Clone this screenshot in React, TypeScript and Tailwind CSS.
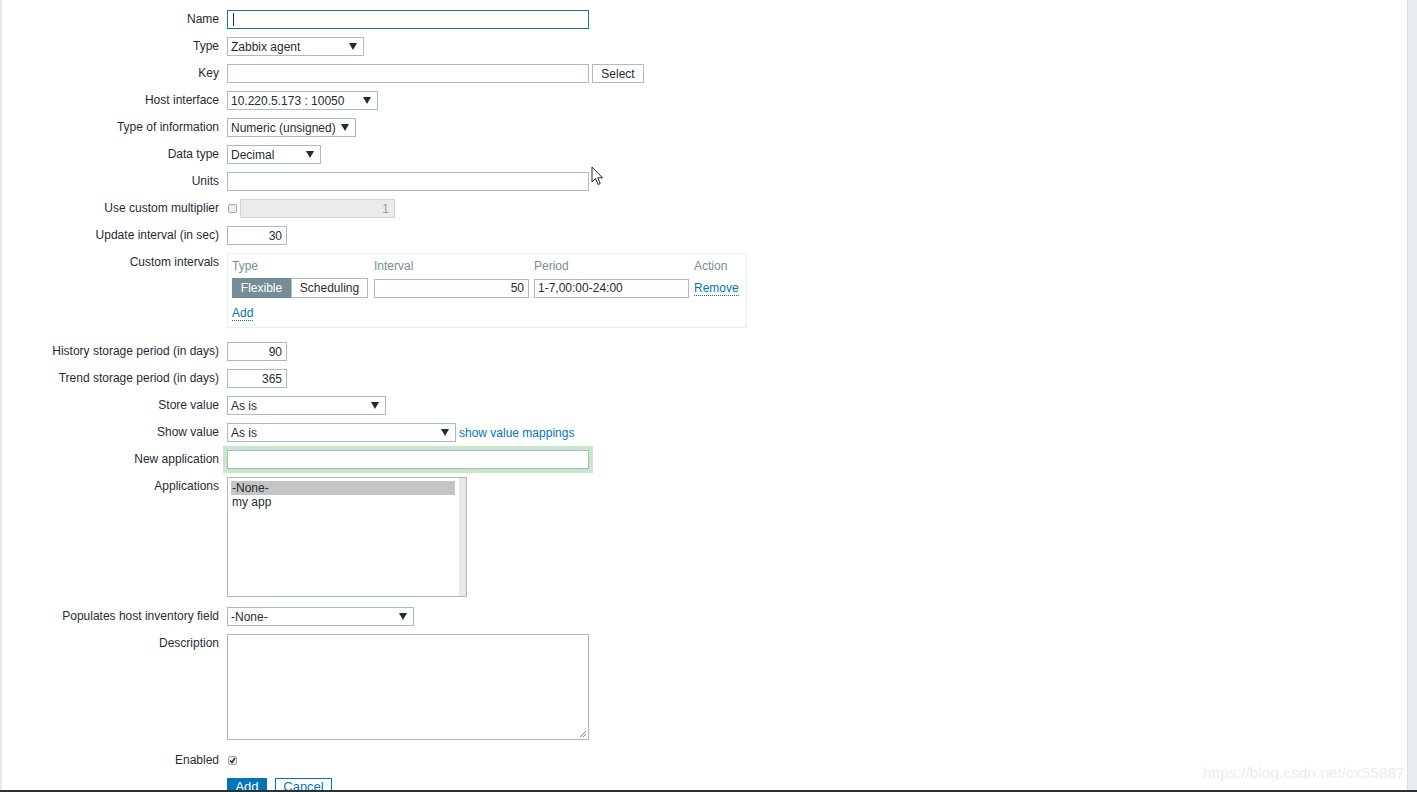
import React from "react";

const font = { fontFamily: '"Liberation Sans", Arial, sans-serif' };

function Arrow() {
  return (
    <svg width="8" height="7" viewBox="0 0 8 7" className="shrink-0">
      <path d="M0 0 L8 0 L4 7 Z" fill="#1f2c33" />
    </svg>
  );
}

function Select({ w, value, color = "text-[#1f2c33]" }: { w: string; value: string; color?: string }) {
  return (
    <div className={`${w} h-[19px] border border-[#acbbc2] bg-white flex items-center justify-between pl-[3px] pr-[6px] ${color}`}>
      <span className="leading-[17px] pt-[2px]">{value}</span>
      <Arrow />
    </div>
  );
}

function Input({ w, value = "", right = false, extra = "" }: { w: string; value?: string; right?: boolean; extra?: string }) {
  return (
    <div
      className={`${w} h-[19px] border border-[#acbbc2] bg-white flex items-center px-[4px] pt-px leading-[17px] text-[#1f2c33] ${
        right ? "justify-end" : ""
      } ${extra}`}
    >
      {value}
    </div>
  );
}

function Row({ label, children, cls = "" }: { label: string; children: React.ReactNode; cls?: string }) {
  return (
    <div className={`flex items-start ${cls}`}>
      <div className="w-[217px] shrink-0 text-right h-[19px] leading-[19px] text-[#1f2c33]">{label}</div>
      <div className="ml-2 flex items-start">{children}</div>
    </div>
  );
}

function Checkbox({ checked = false }: { checked?: boolean }) {
  return (
    <div className="w-[9px] h-[9px] mt-[5px] ml-px border border-[#a6a6a6] bg-[#ececec] rounded-[2px] flex items-center justify-center">
      {checked && (
        <svg width="7" height="7" viewBox="0 0 7 7">
          <path d="M1 3.5 L3 5.5 L6 1" stroke="#333" strokeWidth="1.6" fill="none" />
        </svg>
      )}
    </div>
  );
}

export default function App() {
  return (
    <div className="w-[1417px] h-[792px] overflow-hidden flex flex-col bg-white relative text-[12px]" style={font}>
      <div className="flex flex-1 min-h-0">
        <div className="w-[2px] bg-[#e6eaed] shrink-0" />
        <div className="flex-1 min-w-0 overflow-hidden">
          <div className="flex flex-col gap-2 pt-[10px]">
            <Row label="Name">
              <div className="w-[362px] h-[19px] border border-[#1f6fa5] bg-white flex items-center pl-[5px]">
                <div className="w-px h-[13px] bg-[#1f2c33]" />
              </div>
            </Row>
            <Row label="Type">
              <Select w="w-[137px]" value="Zabbix agent" />
            </Row>
            <Row label="Key">
              <Input w="w-[362px]" />
              <div className="ml-[3px] w-[52px] h-[19px] border border-[#acbbc2] bg-white flex items-center justify-center pt-px text-[#1f2c33] leading-[17px]">
                Select
              </div>
            </Row>
            <Row label="Host interface">
              <Select w="w-[151px]" value="10.220.5.173 : 10050" />
            </Row>
            <Row label="Type of information">
              <Select w="w-[129px]" value="Numeric (unsigned)" />
            </Row>
            <Row label="Data type">
              <Select w="w-[94px]" value="Decimal" />
            </Row>
            <Row label="Units">
              <Input w="w-[362px]" />
            </Row>
            <Row label="Use custom multiplier">
              <Checkbox />
              <div className="ml-[3px] w-[155px] h-[19px] border border-[#cfd6da] bg-[#ebebeb] flex items-center justify-end pr-[5px] pt-px text-[#9a9a9a] leading-[17px]">
                1
              </div>
            </Row>
            <Row label="Update interval (in sec)">
              <Input w="w-[60px]" value="30" right />
            </Row>
            <Row label="Custom intervals" cls="mb-[6px]">
              <div className="w-[520px] h-[75px] border border-[#ebeef0] bg-white px-[4px] pt-[5px]">
                <div className="grid grid-cols-[137px_155px_155px_auto] gap-x-[5px] text-[#768d99]">
                  <div className="h-[15px] leading-[15px]">Type</div>
                  <div className="h-[15px] leading-[15px]">Interval</div>
                  <div className="h-[15px] leading-[15px]">Period</div>
                  <div className="h-[15px] leading-[15px]">Action</div>
                </div>
                <div className="grid grid-cols-[137px_155px_155px_auto] gap-x-[5px] mt-[4px] items-center">
                  <div className="flex h-[20px]">
                    <div className="w-[59px] h-[20px] bg-[#768d99] text-white flex items-center justify-center">Flexible</div>
                    <div className="w-[77px] h-[20px] border border-[#acbbc2] bg-white text-[#1f2c33] flex items-center justify-center">
                      Scheduling
                    </div>
                  </div>
                  <Input w="w-[155px]" value="50" right />
                  <Input w="w-[155px]" value="1-7,00:00-24:00" extra="!pl-[3px]" />
                  <span className="text-[#0275b8] border-b border-dotted border-[#0275b8] leading-[13px] self-center w-fit mt-[2px]">Remove</span>
                </div>
                <div className="mt-[9px] flex">
                  <span className="text-[#0275b8] border-b border-dotted border-[#0275b8] leading-[13px]">Add</span>
                </div>
              </div>
            </Row>
            <Row label="History storage period (in days)">
              <Input w="w-[60px]" value="90" right />
            </Row>
            <Row label="Trend storage period (in days)">
              <Input w="w-[60px]" value="365" right />
            </Row>
            <Row label="Store value">
              <Select w="w-[159px]" value="As is" />
            </Row>
            <Row label="Show value">
              <Select w="w-[229px]" value="As is" />
              <span className="ml-[3px] text-[#0275b8] h-[19px] leading-[19px] relative top-px">show value mappings</span>
            </Row>
            <Row label="New application">
              <div className="w-[362px] h-[19px] border border-[#acbbc2] bg-white shadow-[0_0_0_4px_#c9e5ca]" />
            </Row>
            <Row label="Applications">
              <div className="w-[240px] h-[120px] border border-[#acbbc2] bg-white flex">
                <div className="flex-1 pt-[3px] pl-[3px] pr-[4px]">
                  <div className="h-[14px] leading-[14px] bg-[#c4c4c4] text-[#1f2c33] pl-px">-None-</div>
                  <div className="h-[14px] leading-[14px] text-[#1f2c33] pl-px">my app</div>
                </div>
                <div className="w-[7px] bg-[#e8e8e8]" />
              </div>
            </Row>
            <Row label="Populates host inventory field" cls="mt-[2px]">
              <Select w="w-[187px]" value="-None-" />
            </Row>
            <Row label="Description">
              <div className="w-[362px] h-[106px] border border-[#acbbc2] bg-white relative">
                <svg width="8" height="8" viewBox="0 0 8 8" className="absolute right-[1px] bottom-[1px]">
                  <path d="M7 1 L1 7 M7 4 L4 7" stroke="#888" strokeWidth="1" />
                </svg>
              </div>
            </Row>
            <Row label="Enabled" cls="mt-[3px]">
              <Checkbox checked />
            </Row>
            <div className="flex ml-[225px] gap-2">
              <div className="w-[40px] h-[24px] bg-[#0275b8] text-white flex justify-center pt-px leading-[15px] text-[13px]">Add</div>
              <div className="w-[57px] h-[24px] border border-[#0275b8] bg-white text-[#0275b8] flex justify-center leading-[15px] text-[13px]">
                Cancel
              </div>
            </div>
          </div>
        </div>
        <div className="w-[10px] shrink-0 bg-[#e8ecef] border-l border-[#d8dde0]" />
      </div>
      <div className="h-[2px] bg-[#2d3134] shrink-0" />

      <svg width="14" height="20" viewBox="0 0 14 20" className="absolute left-[591px] top-[166px]">
        <path d="M1 1 L1 16 L4.5 12.5 L7 18.5 L9.2 17.5 L6.8 11.8 L11.5 11.8 Z" fill="white" stroke="#222" strokeWidth="1" strokeLinejoin="round" />
      </svg>
      <div className="absolute left-[1203px] top-[763px] text-[15.5px] text-[#ececec] leading-[20px]" style={font}>
        https://blog.csdn.net/cx55887
      </div>
    </div>
  );
}
